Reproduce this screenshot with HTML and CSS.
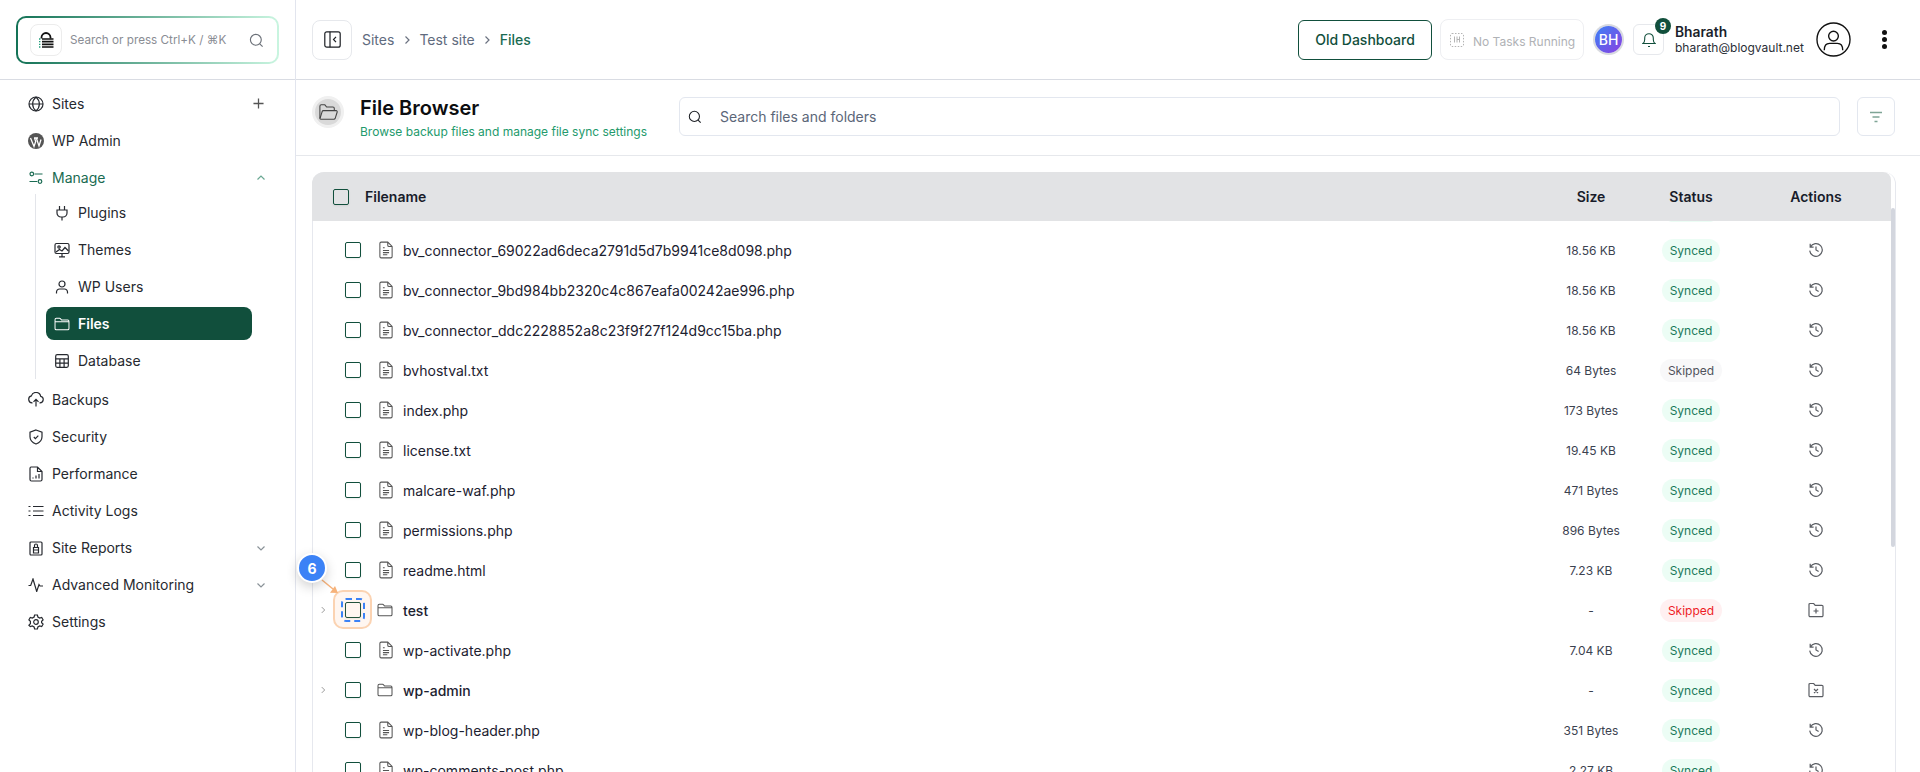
FILE: index.html
```html
<!DOCTYPE html>
<html lang="en">

<head>
    <meta charset="UTF-8">
    <meta name="viewport" content="width=device-width, initial-scale=1.0">
    <title>File Browser</title>
    <link rel="stylesheet" href="styles.css">
</head>

<body>
    <svg class="sprites" width="0" height="0" aria-hidden="true">
        <symbol id="i-file" viewBox="0 0 16 20"><path d="M3 1h7l5 5v11.5a1.5 1.5 0 0 1-1.5 1.5h-11A1.5 1.5 0 0 1 1 17.5v-15A1.5 1.5 0 0 1 2.5 1zM10 1v3.5A1.5 1.5 0 0 0 11.5 6H15M4.5 10.5h7M4.5 13h7M4.5 15.5h5M4.5 7.5h2"/></symbol>
        <symbol id="i-folder" viewBox="0 0 18 16"><path d="M2.5 1.5h3.7c.5 0 .9.2 1.2.6l1.1 1.4h7a1.5 1.5 0 0 1 1.5 1.5V13a1.5 1.5 0 0 1-1.5 1.5h-13A1.5 1.5 0 0 1 1 13V3a1.5 1.5 0 0 1 1.5-1.5zM1 5.5h16"/></symbol>
        <symbol id="i-history" viewBox="0 0 16 16"><path d="M2.2 1.8v3.4h3.4M2.4 5a6.3 6.3 0 1 1-.7 3.6M8 4.6V8l2.6 1.6"/></symbol>
        <symbol id="i-folder-add" viewBox="0 0 16 16"><path d="M2 1.5h3.7l1.5 1.8h6.6A1.2 1.2 0 0 1 15 4.5v9a1.2 1.2 0 0 1-1.2 1.2H2.2A1.2 1.2 0 0 1 1 13.5v-11a1 1 0 0 1 1-1zM8 6.5v5M5.5 9h5"/></symbol>
        <symbol id="i-folder-x" viewBox="0 0 16 16"><path d="M2 1.5h3.7l1.5 1.8h6.6A1.2 1.2 0 0 1 15 4.5v9a1.2 1.2 0 0 1-1.2 1.2H2.2A1.2 1.2 0 0 1 1 13.5v-11a1 1 0 0 1 1-1zM6 7l4 4M10 7l-4 4"/></symbol>
        <symbol id="i-chev-down" viewBox="0 0 12 12"><path d="M2.5 4.5 6 8l3.5-3.5"/></symbol>
        <symbol id="i-chev-right" viewBox="0 0 12 12"><path d="M4.5 2.5 8 6l-3.5 3.5"/></symbol>
    </svg>

    <div class="app">
        <aside class="sidebar">
            <div class="side-top">
                <div class="quick-search">
                    <span class="logo-box">
                        <svg width="16" height="16" viewBox="0 0 16 16"><path d="M3.5 6.5v-1a4.500 4.500 0 0 1 9 0v1" fill="none" stroke="#111" stroke-width="1.800"/><path d="M4 7h11.500M4 9.700h11.500M4 12.400h11.500M4 15h11.500" stroke="#111" stroke-width="1.700"/><path d="M1 7h2M1 9.700h2M1 12.400h2M1 15h2" stroke="#1f9d7a" stroke-width="1.300" stroke-dasharray="1 .6"/></svg>
                    </span>
                    <span class="quick-text">Search or press Ctrl+K / ⌘K</span>
                    <svg class="ic gray" width="15" height="15" viewBox="0 0 16 16"><circle cx="7.3" cy="7.3" r="5.8"/><path d="m11.5 11.5 3 3"/></svg>
                </div>
            </div>

            <nav class="nav">
                <a class="nav-item">
                    <svg class="ic" width="16" height="16" viewBox="0 0 16 16"><circle cx="8" cy="8" r="7"/><path d="M1 8h14M8 1c-4.5 4-4.5 10 0 14M8 1c4.5 4 4.5 10 0 14"/></svg>
                    <span>Sites</span>
                    <svg class="ic end plus" width="11" height="11" viewBox="0 0 12 12"><path d="M6 .5v11M.5 6h11"/></svg>
                </a>
                <a class="nav-item">
                    <svg width="16" height="16" viewBox="0 0 16 16"><circle cx="8" cy="8" r="8" fill="#555"/><path d="M2.5 5 6 13.5 7.7 8.5 6.6 5.2M6 5h4M8.3 5 11 13l2-6.500" fill="none" stroke="#fff" stroke-width="1.3"/></svg>
                    <span>WP Admin</span>
                </a>
                <a class="nav-item nav-open">
                    <svg class="ic" width="14" height="14" viewBox="0 0 14 14"><circle cx="2.8" cy="3" r="1.8"/><circle cx="11" cy="10.5" r="1.8"/><path d="M5.5 3h8M.5 10.5h7.800"/></svg>
                    <span>Manage</span>
                    <svg class="ic end chev" width="12" height="12" viewBox="0 0 12 12"><path d="M2.5 7.5 6 4l3.5 3.500"/></svg>
                </a>
                <div class="subnav">
                    <a class="sub-item">
                        <svg class="ic" width="14" height="16" viewBox="0 0 14 16"><path d="M4.5 1v4M9.5 1v4M2 5h10v3a4 4 0 0 1-4 4H6a4 4 0 0 1-4-4zM7 12v3.5"/></svg>
                        <span>Plugins</span>
                    </a>
                    <a class="sub-item">
                        <svg class="ic" width="16" height="16" viewBox="0 0 16 16"><rect x="1" y="1.5" width="14" height="10" rx="1.5"/><circle cx="5" cy="5" r="1.2"/><path d="m2 10 3.5-2.5L8 9l3-3.5L14.5 9M8 11.5v3M5 14.8h6"/></svg>
                        <span>Themes</span>
                    </a>
                    <a class="sub-item">
                        <svg class="ic" width="14" height="14" viewBox="0 0 14 14"><circle cx="7" cy="4" r="3"/><path d="M1.5 13.5V12a3 3 0 0 1 3-3h5a3 3 0 0 1 3 3v1.500"/></svg>
                        <span>WP Users</span>
                    </a>
                    <a class="sub-item sub-active">
                        <svg class="ic" width="16" height="14" viewBox="0 0 18 16"><use href="#i-folder"/></svg>
                        <span>Files</span>
                    </a>
                    <a class="sub-item">
                        <svg class="ic" width="14" height="14" viewBox="0 0 14 14"><rect x=".7" y=".7" width="12.6" height="12.6" rx="1.5"/><path d="M.7 4.9h12.6M.7 9.1h12.6M4.9 4.9v8.4M9.1 4.9v8.4"/></svg>
                        <span>Database</span>
                    </a>
                </div>
                <a class="nav-item">
                    <svg class="ic" width="16" height="15" viewBox="0 0 16 15"><path d="M4.5 10.8H4a3.5 3.5 0 0 1-.6-6.900 4.800 4.800 0 0 1 9.300.4 3.300 3.300 0 0 1-.7 6.500h-.5M8 14.500V7.500M5.500 9.800 8 7.300l2.500 2.500"/></svg>
                    <span>Backups</span>
                </a>
                <a class="nav-item">
                    <svg class="ic" width="14" height="16" viewBox="0 0 14 16"><path d="M7 1 13 3.200v4.600c0 3.300-2.500 6-6 7.200-3.500-1.200-6-3.900-6-7.200V3.200zM4.800 8l1.600 1.600 2.900-3"/></svg>
                    <span>Security</span>
                </a>
                <a class="nav-item">
                    <svg class="ic" width="14" height="16" viewBox="0 0 14 16"><path d="M2 1h6.500L13 5.500v8A1.500 1.500 0 0 1 11.500 15h-9A1.500 1.500 0 0 1 1 13.500v-11A1.500 1.500 0 0 1 2 1zM8.500 1v4.500H13M4 12.500v-1M7 12.500V9.500M10 12.500V8"/></svg>
                    <span>Performance</span>
                </a>
                <a class="nav-item">
                    <svg class="ic" width="16" height="12" viewBox="0 0 16 12"><path d="M5 1.500h10.500M5 6h10.500M5 10.500h10.500M.5 1.500h2M.5 6h2M.5 10.500h2"/></svg>
                    <span>Activity Logs</span>
                </a>
                <a class="nav-item">
                    <svg class="ic" width="14" height="16" viewBox="0 0 14 16"><path d="M2 2h2.500M9.500 2H12a1 1 0 0 1 1 1v11a1 1 0 0 1-1 1H2a1 1 0 0 1-1-1V3a1 1 0 0 1 1-1zM4.500 13V7.500h5V13zM5.500 7.500V5.500a1.500 1.500 0 0 1 3 0v2M4.500 10h5"/></svg>
                    <span>Site Reports</span>
                    <svg class="ic end chev" width="12" height="12"><use href="#i-chev-down"/></svg>
                </a>
                <a class="nav-item">
                    <svg class="ic" width="16" height="14" viewBox="0 0 16 14"><path d="M.5 7.500h2.200L5 1l3.700 12.500 2.300-7 1 1.500h3"/></svg>
                    <span>Advanced Monitoring</span>
                    <svg class="ic end chev" width="12" height="12"><use href="#i-chev-down"/></svg>
                </a>
                <a class="nav-item">
                    <svg class="ic" width="16" height="16" viewBox="0 0 16 16"><circle cx="8" cy="8" r="2.300"/><path d="m6.600 1 2.800 0 .5 2 1.800 1 2-.6 1.400 2.400-1.500 1.500v1.400l1.500 1.500-1.400 2.400-2-.6-1.800 1-.5 2H6.600l-.5-2-1.800-1-2 .6L.9 11.200l1.500-1.500V7.300L.9 5.800l1.400-2.400 2 .6 1.800-1z"/></svg>
                    <span>Settings</span>
                </a>
            </nav>
        </aside>

        <div class="main">
            <header class="topbar">
                <button class="collapse-btn">
                    <svg class="ic dark" width="17" height="17" viewBox="0 0 17 17"><rect x=".8" y=".8" width="15.4" height="15.4" rx="2"/><path d="M6 .8v15.400M12 5.800 9.500 8.500l2.500 2.700"/></svg>
                </button>
                <div class="crumbs">
                    <span>Sites</span>
                    <svg class="ic crumb-sep" width="12" height="12"><use href="#i-chev-right"/></svg>
                    <span>Test site</span>
                    <svg class="ic crumb-sep" width="12" height="12"><use href="#i-chev-right"/></svg>
                    <span class="crumb-now">Files</span>
                </div>
                <div class="top-right">
                    <button class="old-btn">Old Dashboard</button>
                    <div class="tasks">
                        <svg width="14" height="14" viewBox="0 0 14 14" fill="none" stroke="#b4b4b4"><rect x=".5" y=".5" width="13" height="13" rx="1.500" stroke-dasharray="1.500 1.500"/><path d="M4.500 3.500v6M7 3.500v6M7 6.500h2.500M9.500 3.500v6"/></svg>
                        <span>No Tasks Running</span>
                    </div>
                    <div class="avatar">BH</div>
                    <div class="bell">
                        <svg width="14" height="16" viewBox="0 0 14 16" fill="none" stroke="#114f3c" stroke-width="1.100"><path d="M1 11.500h12c-1.200-1-1.700-2-1.700-4V6a4.300 4.300 0 0 0-8.600 0v1.500c0 2-.5 3-1.700 4zM6 14.500h2"/></svg>
                        <span class="bell-count">9</span>
                    </div>
                    <div class="user">
                        <strong>Bharath</strong>
                        <span>bharath@blogvault.net</span>
                    </div>
                    <svg class="user-pic" width="35" height="35" viewBox="0 0 36 36" fill="none" stroke="#111" stroke-width="1.400"><circle cx="18" cy="18" r="17"/><circle cx="18" cy="14.500" r="5"/><path d="M8.500 29c0-5 2-7 5.500-7h8c3.500 0 5.500 2 5.500 7"/></svg>
                    <span class="more"><i></i><i></i><i></i></span>
                </div>
            </header>

            <section class="page-head">
                <span class="head-icon">
                    <svg width="20" height="18" viewBox="0 0 22 20" fill="none" stroke="#444" stroke-width="1.200"><path d="M2 17V3.500A1.500 1.500 0 0 1 3.500 2h4l2 2.500h7A1.500 1.500 0 0 1 18 6v2"/><path d="M2 17.500 4.500 9.500A1.500 1.500 0 0 1 6 8.500h14a1.200 1.200 0 0 1 1.200 1.500L19 17a1.500 1.500 0 0 1-1.500 1H3.500A1.500 1.500 0 0 1 2 17.500z"/></svg>
                </span>
                <div class="head-text">
                    <h1>File Browser</h1>
                    <p>Browse backup files and manage file sync settings</p>
                </div>
                <div class="file-search">
                    <svg class="ic dark" width="14" height="14" viewBox="0 0 16 16"><circle cx="7.3" cy="7.3" r="5.8"/><path d="m11.5 11.5 3 3"/></svg>
                    <span>Search files and folders</span>
                </div>
                <button class="filter-btn">
                    <svg width="14" height="12" viewBox="0 0 14 12" fill="none" stroke="#7fa596" stroke-width="1.500"><path d="M1 1.500h12M3.500 6h7M5.500 10.500h3"/></svg>
                </button>
            </section>

            <section class="content">
                <div class="table-card">
                    <div class="row head-row">
                        <span class="cell-check"><span class="box"></span></span>
                        <span class="cell-name">Filename</span>
                        <span class="cell-size">Size</span>
                        <span class="cell-status">Status</span>
                        <span class="cell-actions">Actions</span>
                    </div>
                    <div class="rows">
                        <div class="row">
                            <span class="cell-name file"><span class="box"></span></span>
                            <span class="cell-size"></span>
                            <span class="cell-status"><span class="badge ok">Synced</span></span>
                            <span class="cell-actions"></span>
                        </div>
                        <div class="row">
                            <span class="cell-name file"><span class="box"></span><svg class="ic ficon" width="14" height="18"><use href="#i-file"/></svg>bv_connector_69022ad6deca2791d5d7b9941ce8d098.php</span>
                            <span class="cell-size">18.56 KB</span>
                            <span class="cell-status"><span class="badge ok">Synced</span></span>
                            <span class="cell-actions"><svg class="ic act"><use href="#i-history"/></svg></span>
                        </div>
                        <div class="row">
                            <span class="cell-name file"><span class="box"></span><svg class="ic ficon" width="14" height="18"><use href="#i-file"/></svg>bv_connector_9bd984bb2320c4c867eafa00242ae996.php</span>
                            <span class="cell-size">18.56 KB</span>
                            <span class="cell-status"><span class="badge ok">Synced</span></span>
                            <span class="cell-actions"><svg class="ic act"><use href="#i-history"/></svg></span>
                        </div>
                        <div class="row">
                            <span class="cell-name file"><span class="box"></span><svg class="ic ficon" width="14" height="18"><use href="#i-file"/></svg>bv_connector_ddc2228852a8c23f9f27f124d9cc15ba.php</span>
                            <span class="cell-size">18.56 KB</span>
                            <span class="cell-status"><span class="badge ok">Synced</span></span>
                            <span class="cell-actions"><svg class="ic act"><use href="#i-history"/></svg></span>
                        </div>
                        <div class="row">
                            <span class="cell-name file"><span class="box"></span><svg class="ic ficon" width="14" height="18"><use href="#i-file"/></svg>bvhostval.txt</span>
                            <span class="cell-size">64 Bytes</span>
                            <span class="cell-status"><span class="badge skip">Skipped</span></span>
                            <span class="cell-actions"><svg class="ic act"><use href="#i-history"/></svg></span>
                        </div>
                        <div class="row">
                            <span class="cell-name file"><span class="box"></span><svg class="ic ficon" width="14" height="18"><use href="#i-file"/></svg>index.php</span>
                            <span class="cell-size">173 Bytes</span>
                            <span class="cell-status"><span class="badge ok">Synced</span></span>
                            <span class="cell-actions"><svg class="ic act"><use href="#i-history"/></svg></span>
                        </div>
                        <div class="row">
                            <span class="cell-name file"><span class="box"></span><svg class="ic ficon" width="14" height="18"><use href="#i-file"/></svg>license.txt</span>
                            <span class="cell-size">19.45 KB</span>
                            <span class="cell-status"><span class="badge ok">Synced</span></span>
                            <span class="cell-actions"><svg class="ic act"><use href="#i-history"/></svg></span>
                        </div>
                        <div class="row">
                            <span class="cell-name file"><span class="box"></span><svg class="ic ficon" width="14" height="18"><use href="#i-file"/></svg>malcare-waf.php</span>
                            <span class="cell-size">471 Bytes</span>
                            <span class="cell-status"><span class="badge ok">Synced</span></span>
                            <span class="cell-actions"><svg class="ic act"><use href="#i-history"/></svg></span>
                        </div>
                        <div class="row">
                            <span class="cell-name file"><span class="box"></span><svg class="ic ficon" width="14" height="18"><use href="#i-file"/></svg>permissions.php</span>
                            <span class="cell-size">896 Bytes</span>
                            <span class="cell-status"><span class="badge ok">Synced</span></span>
                            <span class="cell-actions"><svg class="ic act"><use href="#i-history"/></svg></span>
                        </div>
                        <div class="row">
                            <span class="cell-name file"><span class="box"></span><svg class="ic ficon" width="14" height="18"><use href="#i-file"/></svg>readme.html</span>
                            <span class="cell-size">7.23 KB</span>
                            <span class="cell-status"><span class="badge ok">Synced</span></span>
                            <span class="cell-actions"><svg class="ic act"><use href="#i-history"/></svg></span>
                        </div>
                        <div class="row">
                            <svg class="ic row-chev" width="10" height="10" viewBox="0 0 12 12"><use href="#i-chev-right"/></svg>
                            <span class="cell-name file folder">
                                <span class="box-wrap">
                                    <span class="box"></span>
                                    <span class="mark-glow"></span>
                                    <span class="mark-dash"></span>
                                    <svg class="mark-arrow" width="18" height="16" viewBox="0 0 18 16"><path d="M1 1 12 10" stroke="#f6b27a" stroke-width="1.500"/><path d="M17 14 9 13.700 14 7z" fill="#f6b27a"/></svg>
                                    <span class="mark-num">6</span>
                                </span>
                                <svg class="ic ficon" width="16" height="14"><use href="#i-folder"/></svg>test</span>
                            <span class="cell-size">-</span>
                            <span class="cell-status"><span class="badge bad">Skipped</span></span>
                            <span class="cell-actions"><svg class="ic act"><use href="#i-folder-add"/></svg></span>
                        </div>
                        <div class="row">
                            <span class="cell-name file"><span class="box"></span><svg class="ic ficon" width="14" height="18"><use href="#i-file"/></svg>wp-activate.php</span>
                            <span class="cell-size">7.04 KB</span>
                            <span class="cell-status"><span class="badge ok">Synced</span></span>
                            <span class="cell-actions"><svg class="ic act"><use href="#i-history"/></svg></span>
                        </div>
                        <div class="row">
                            <svg class="ic row-chev" width="10" height="10" viewBox="0 0 12 12"><use href="#i-chev-right"/></svg>
                            <span class="cell-name file folder"><span class="box"></span><svg class="ic ficon" width="16" height="14"><use href="#i-folder"/></svg>wp-admin</span>
                            <span class="cell-size">-</span>
                            <span class="cell-status"><span class="badge ok">Synced</span></span>
                            <span class="cell-actions"><svg class="ic act"><use href="#i-folder-x"/></svg></span>
                        </div>
                        <div class="row">
                            <span class="cell-name file"><span class="box"></span><svg class="ic ficon" width="14" height="18"><use href="#i-file"/></svg>wp-blog-header.php</span>
                            <span class="cell-size">351 Bytes</span>
                            <span class="cell-status"><span class="badge ok">Synced</span></span>
                            <span class="cell-actions"><svg class="ic act"><use href="#i-history"/></svg></span>
                        </div>
                        <div class="row">
                            <span class="cell-name file"><span class="box"></span><svg class="ic ficon" width="14" height="18"><use href="#i-file"/></svg>wp-comments-post.php</span>
                            <span class="cell-size">2.27 KB</span>
                            <span class="cell-status"><span class="badge ok">Synced</span></span>
                            <span class="cell-actions"><svg class="ic act"><use href="#i-history"/></svg></span>
                        </div>
                    </div>
                    <span class="scroll-thumb"></span>
                </div>
            </section>
        </div>
    </div>
</body>

</html>
```

FILE: styles.css
```css
:root {
    --green: #114f3c;
    --green-text: #1a6b52;
    --line: #d9dce3;
    --text: #1f2430;
    --muted: #5b6678;
    --font: "Inter", "Liberation Sans", sans-serif;
}

* {
    box-sizing: border-box;
}

html, body {
    height: 100%;
}

body {
    margin: 0;
    font-family: var(--font);
    color: var(--text);
    background: #fff;
    overflow: hidden;
}

button {
    font-family: inherit;
    padding: 0;
    background: #fff;
}

.sprites {
    display: none;
}

.ic {
    fill: none;
    stroke: currentColor;
    stroke-width: 1.2;
    flex: none;
}

.app {
    display: flex;
    height: 100vh;
}

/* sidebar */
.sidebar {
    width: 296px;
    flex: none;
    border-right: 1px solid #e2e5ee;
}

.side-top {
    height: 80px;
    padding: 16px;
    border-bottom: 1px solid var(--line);
}

.quick-search {
    display: flex;
    align-items: center;
    height: 48px;
    padding: 0 13px 0 12px;
    border: 2px solid transparent;
    border-radius: 10px;
    background: linear-gradient(#fff, #fff) padding-box,
        linear-gradient(90deg, #137256, #c9f5e0) border-box;
}

.logo-box {
    display: flex;
    align-items: center;
    justify-content: center;
    width: 32px;
    height: 32px;
    flex: none;
    border: 1px solid #ececec;
    border-radius: 8px;
}

.quick-text {
    flex: 1;
    margin-left: 8px;
    font-size: 11.7px;
    color: #8a8d94;
    white-space: nowrap;
}

.gray {
    color: #6b7078;
}

.nav {
    padding: 5px 28px 0 28px;
}

.nav-item {
    display: flex;
    align-items: center;
    height: 37px;
    font-size: 14px;
    color: #26292f;
}

.nav-item > svg:first-child {
    width: 16px;
    margin-right: 8px;
}

.nav-item .end {
    margin-left: auto;
}

.plus {
    color: #555;
    stroke-width: 1.4;
    margin-right: 3px;
}

.chev {
    color: #8a9298;
}

.nav-open {
    color: var(--green-text);
}

.nav-open .chev {
    color: #6aa893;
}

.subnav {
    margin: -2px 0 2px 7px;
    padding: 0 15px 0 10px;
    border-left: 1px solid #e3e5ea;
}

.sub-item {
    display: flex;
    align-items: center;
    height: 37px;
    padding-left: 8px;
    font-size: 14px;
    color: #26292f;
    border-radius: 8px;
}

.sub-item > svg {
    width: 16px;
    margin-right: 8px;
}

.sub-active {
    height: 33px;
    margin: 2px 0;
    background: var(--green);
    color: #fff;
    font-weight: 600;
}

/* top bar */
.main {
    flex: 1;
    min-width: 0;
    display: flex;
    flex-direction: column;
}

.topbar {
    display: flex;
    align-items: center;
    height: 80px;
    flex: none;
    padding: 0 24px 0 16px;
    border-bottom: 1px solid var(--line);
}

.collapse-btn {
    display: flex;
    align-items: center;
    justify-content: center;
    width: 40px;
    height: 40px;
    border: 1px solid #e6e8ec;
    border-radius: 8px;
}

.dark {
    color: #1c1f24;
}

.crumbs {
    display: flex;
    align-items: center;
    gap: 6.5px;
    margin-left: 10px;
    font-size: 14px;
    color: #5f6b7e;
}

.crumb-sep {
    color: #6b7280;
}

.crumb-now {
    color: var(--green-text);
    font-weight: 500;
}

.top-right {
    display: flex;
    align-items: center;
    margin-left: auto;
}

.old-btn {
    width: 134px;
    height: 40px;
    border: 1px solid var(--green);
    border-radius: 6px;
    font-size: 14px;
    font-weight: 500;
    color: var(--green);
}

.tasks {
    display: flex;
    align-items: center;
    gap: 9px;
    width: 144px;
    height: 41px;
    margin-left: 8px;
    padding-left: 9px;
    border: 1px solid #eeeff2;
    border-radius: 8px;
    font-size: 12px;
    color: #b0b2b6;
    white-space: nowrap;
}

.tasks span {
    margin-top: 3px;
}

.avatar {
    display: flex;
    align-items: center;
    justify-content: center;
    width: 27px;
    height: 27px;
    margin-left: 11px;
    border-radius: 50%;
    background: linear-gradient(135deg, #3b82f6, #8b3fe0);
    box-shadow: 0 0 0 2px #d8dae0;
    color: #fff;
    font-size: 14px;
    font-weight: 500;
}

.bell {
    position: relative;
    display: flex;
    align-items: center;
    justify-content: center;
    width: 31px;
    height: 31px;
    margin-left: 11px;
    border: 1px solid #e6e8ec;
    border-radius: 6px;
}

.bell-count {
    position: absolute;
    top: -7px;
    right: -8px;
    display: flex;
    align-items: center;
    justify-content: center;
    width: 16px;
    height: 16px;
    border-radius: 50%;
    background: var(--green);
    color: #fff;
    font-size: 10px;
    font-weight: 700;
}

.user {
    display: flex;
    flex-direction: column;
    width: 129px;
    margin-left: 11px;
    white-space: nowrap;
}

.user strong {
    font-size: 13.8px;
    font-weight: 600;
    line-height: 16px;
    color: #1b1f2b;
}

.user span {
    font-size: 12px;
    line-height: 16px;
    color: #2a2e36;
}

.user-pic {
    margin-left: 12px;
}

.more {
    display: flex;
    flex-direction: column;
    gap: 2px;
    margin-left: 31px;
    margin-right: 9px;
}

.more i {
    width: 5px;
    height: 5px;
    border-radius: 50%;
    background: #111;
}

/* page head */
.page-head {
    display: flex;
    align-items: flex-start;
    height: 76px;
    flex: none;
    padding: 16px 25px 0 16px;
    border-bottom: 1px solid #e6e8ec;
}

.head-icon {
    display: flex;
    align-items: center;
    justify-content: center;
    flex: none;
    width: 26px;
    height: 26px;
    margin: 3px;
    border-radius: 50%;
    background: #d9d9d9;
    box-shadow: 0 0 0 3px #f0f0f0;
}

.head-text {
    flex: none;
    width: 319px;
    margin: -1px 0 0 16px;
}

h1 {
    margin: 0;
    font-size: 20px;
    font-weight: 600;
    line-height: 26px;
    color: #0c0d10;
}

.head-text p {
    margin: 3px 0 0;
    font-size: 12px;
    line-height: 16px;
    color: #239a6c;
}

.file-search {
    flex: 1;
    display: flex;
    align-items: center;
    gap: 18px;
    height: 39px;
    margin-top: 1px;
    padding-left: 8px;
    border: 1px solid #e3e7ef;
    border-radius: 6px;
    font-size: 14px;
    color: var(--muted);
}

.filter-btn {
    display: flex;
    align-items: center;
    justify-content: center;
    flex: none;
    width: 38px;
    height: 39px;
    margin: 1px 0 0 17px;
    border: 1px solid #e3e7ef;
    border-radius: 6px;
}

/* table */
.content {
    flex: 1;
    min-height: 0;
    padding: 16px 24px 0 16px;
}

.table-card {
    position: relative;
    height: 100%;
    padding-right: 4px;
    border-radius: 12px 12px 0 0;
    border: 1px solid #e6e8ee;
    border-top: none;
    border-bottom: none;
}

.row {
    position: relative;
    display: grid;
    grid-template-columns: 1fr 100px 100px 150px;
    align-items: center;
    height: 40px;
    font-size: 14px;
}

.head-row {
    z-index: 1;
    height: 49px;
    margin-left: -1px;
    background: #e2e3e5;
    grid-template-columns: 53px 1fr 100px 100px 150px;
    border-radius: 12px 8px 0 0;
    font-weight: 600;
    font-size: 14px;
    color: #181c2a;
}

.cell-check {
    padding-left: 21px;
    display: flex;
}

.rows {
    margin-top: -31px;
}

.cell-size {
    text-align: center;
    font-size: 12px;
    color: #3b4250;
}

.head-row .cell-size {
    font-size: 14px;
    color: #181c2a;
}

.cell-status, .cell-actions {
    display: flex;
    justify-content: center;
}

.box {
    display: block;
    width: 16px;
    height: 16px;
    flex: none;
    background: #fff;
    border: 1.3px solid var(--green);
    border-radius: 2px;
    box-shadow: 0 1px 2px rgba(0, 0, 0, 0.08);
}

.head-row .box {
    background: transparent;
}

.file {
    display: flex;
    align-items: center;
    padding-left: 32px;
    color: #1c2130;
    white-space: nowrap;
}

.ficon {
    margin-left: 18px;
    margin-right: 10px;
    color: #555;
}

.folder {
    font-weight: 500;
}

.folder .ficon {
    margin-left: 16px;
    margin-right: 10px;
}

.row-chev {
    position: absolute;
    left: 5px;
    top: 15px;
    color: #9a9a9a;
}

.badge {
    display: block;
    padding: 0 8px;
    font-size: 12px;
    line-height: 23px;
    border-radius: 12px;
}

.ok {
    background: #ecfdf5;
    color: #1a7a5a;
}

.skip {
    background: #f8f8f9;
    color: #50535c;
}

.bad {
    background: #fff0f1;
    color: #ee1c25;
}

.act {
    width: 16px;
    height: 16px;
    color: #5a5d63;
}

.scroll-thumb {
    position: absolute;
    top: 36px;
    right: 0;
    width: 4px;
    height: 339px;
    background: #d3d6de;
    border-radius: 2px;
}

/* walkthrough marker */
.box-wrap {
    position: relative;
    display: block;
}

.mark-glow {
    position: absolute;
    left: -12px;
    top: -12px;
    width: 39px;
    height: 39px;
    background: rgba(251, 146, 60, 0.08);
    border: 2px solid #fbd3b2;
    border-radius: 10px;
}

.mark-dash {
    position: absolute;
    left: -4px;
    top: -4px;
    width: 24px;
    height: 24px;
    border: 2px dashed #3b82f6;
    border-radius: 5px;
}

.mark-arrow {
    position: absolute;
    left: -24px;
    top: -23px;
}

.mark-num {
    position: absolute;
    left: -48px;
    top: -49px;
    display: flex;
    align-items: center;
    justify-content: center;
    width: 30px;
    height: 30px;
    border: 2px solid #fff;
    border-radius: 50%;
    background: #3b82f6;
    color: #fff;
    font-size: 14px;
    font-weight: 700;
    box-shadow: 0 4px 12px rgba(0, 0, 0, 0.18);
}
```
